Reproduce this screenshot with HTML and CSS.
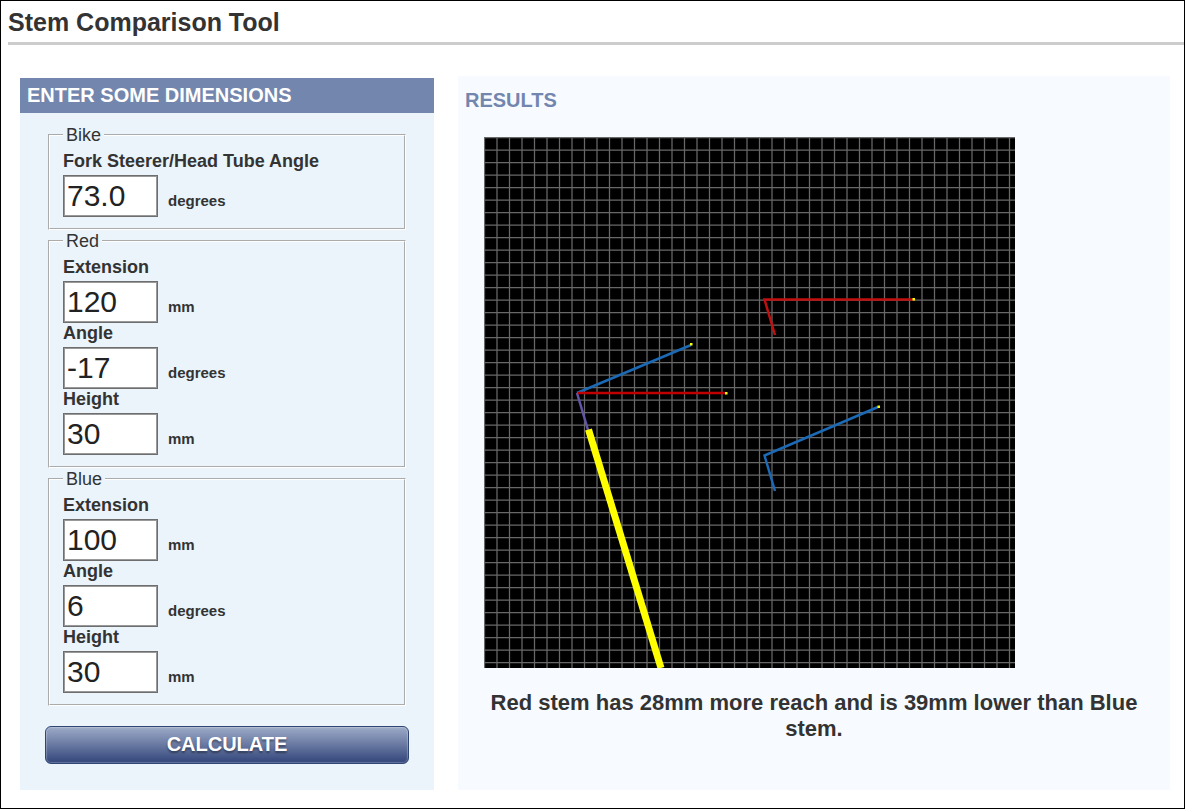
FILE: index.html
```html
<!DOCTYPE html>
<html lang="en">
<head>
  <meta charset="UTF-8">
  <title>Stem Comparison Tool</title>
  <link rel="stylesheet" href="styles.css">
</head>
<body>
  <h1>Stem Comparison Tool</h1>

  <div class="container">
    <div class="panel dimensions">
      <h2>ENTER SOME DIMENSIONS</h2>
      <form id="stemForm">
        <fieldset>
          <legend>Bike</legend>
          <label for="hta">Fork Steerer/Head Tube Angle</label>
          <div class="field"><input type="text" id="hta" value="73.0"><span>degrees</span></div>
        </fieldset>

        <fieldset>
          <legend>Red</legend>
          <label for="redExt">Extension</label>
          <div class="field"><input type="text" id="redExt" value="120"><span>mm</span></div>
          <label for="redAngle">Angle</label>
          <div class="field"><input type="text" id="redAngle" value="-17"><span>degrees</span></div>
          <label for="redHeight">Height</label>
          <div class="field"><input type="text" id="redHeight" value="30"><span>mm</span></div>
        </fieldset>

        <fieldset>
          <legend>Blue</legend>
          <label for="blueExt">Extension</label>
          <div class="field"><input type="text" id="blueExt" value="100"><span>mm</span></div>
          <label for="blueAngle">Angle</label>
          <div class="field"><input type="text" id="blueAngle" value="6"><span>degrees</span></div>
          <label for="blueHeight">Height</label>
          <div class="field"><input type="text" id="blueHeight" value="30"><span>mm</span></div>
        </fieldset>

        <button type="submit">CALCULATE</button>
      </form>
    </div>

    <div class="panel results">
      <h2>RESULTS</h2>
      <svg class="chart" viewBox="0 0 531 531" role="img" aria-label="Stem diagram">
        <rect width="531" height="531" fill="#000"/>
        <g id="gridLines" stroke="#686868" stroke-width="1.25"></g>

        <!-- both stems on the steerer -->
        <path d="M93 256L104 293" stroke="#6355a5" stroke-width="2.5"/>
        <path d="M93 256L207 208" stroke="#1c69b5" stroke-width="2.5"/>
        <path d="M94 256H242" stroke="#c00000" stroke-width="2.5"/>
        <path d="M104.5 292.5L177 531" stroke="#ff0" stroke-width="7"/>

        <!-- red stem, then blue stem, on their own -->
        <path d="M291 198L280.500 162.500H429" stroke="#c01010" stroke-width="2.5" fill="none"/>
        <path d="M291 354L280.500 318.500L394 270" stroke="#1c69b5" stroke-width="2.5" fill="none"/>

        <g fill="#ff0">
          <rect x="206" y="206" width="2.500" height="2.500"/>
          <rect x="241" y="255" width="2.500" height="2.500"/>
          <rect x="428.500" y="161" width="2.500" height="2.500"/>
          <rect x="393.500" y="268.500" width="2.500" height="2.500"/>
        </g>
      </svg>
      <p>Red stem has 28mm more reach and is 39mm lower than Blue stem.</p>
    </div>
  </div>

  <script src="script.js"></script>
</body>
</html>
```

FILE: styles.css
```css
* {
  box-sizing: border-box;
  margin: 0;
  padding: 0;
}

body {
  min-height: 100vh;
  border: 1px solid #000;
  background: #fff;
  color: #333;
  font-family: "Liberation Sans", Arial, sans-serif;
}

h1 {
  margin-left: 7px;
  padding: 5px 0 4px;
  border-bottom: 3px solid #ccc;
  font-size: 25px;
  line-height: 32px;
}

.container {
  display: flex;
  align-items: stretch;
  gap: 24px;
  padding: 31px 14px 18px 19px;
}

.panel h2 {
  font-size: 20px;
  line-height: 35px;
  padding: 0 7px;
}

.dimensions {
  flex: 0 0 36%;
  margin-top: 2px;
  background: #ebf3fb;
}

.dimensions h2 {
  background: #7386ad;
  color: #fff;
}

form {
  padding: 12px 25px 26px;
}

fieldset {
  margin: 0 3px 1px;
  padding: 6px 13px 11px;
  border: 2px groove #fff;
}

legend {
  padding: 0 3px;
  font-size: 18px;
  line-height: 20px;
}

label {
  display: block;
  margin-bottom: 4px;
  font-size: 18px;
  font-weight: bold;
  line-height: 20px;
}

.field {
  display: flex;
  align-items: baseline;
  gap: 10px;
}

input {
  width: 95px;
  height: 42px;
  padding: 0 3px;
  border: 1px solid #6e6e6e;
  box-shadow: inset 0 0 0 1px #999;
  background: #fff;
  color: #222;
  font-family: inherit;
  font-size: 30px;
}

.field span {
  font-size: 15px;
  font-weight: bold;
}

button {
  display: block;
  width: 100%;
  height: 38px;
  margin-top: 20px;
  padding-bottom: 2px;
  border: 1px solid #2f4675;
  border-radius: 6px;
  background: linear-gradient(#9dabc8, #32457a);
  box-shadow: inset 0 0 1px 1px rgba(255, 255, 255, 0.25);
  color: #fff;
  font-family: inherit;
  font-size: 20px;
  font-weight: bold;
  text-shadow: 0 2px 2px rgba(0, 0, 0, 0.4);
  cursor: pointer;
}

.results {
  flex: 1;
  padding: 7px 0 20px;
  background: #f7fbff;
}

.results h2 {
  color: #7386ad;
}

.chart {
  display: block;
  width: 75%;
  max-width: 531px;
  margin: 19px 26px 22px;
}

.results p {
  padding: 0 24px;
  font-size: 22px;
  font-weight: bold;
  line-height: 26px;
  text-align: center;
}
```

FILE: script.js
```js
// grid lines, one every 10mm
const grid = document.getElementById("gridLines");
let d = "";
for (let i = 0; i < 43; i++) {
  const p = 0.5 + i * 12.5;
  d += `M${p} 0V531M0 ${p}H531`;
}
const path = document.createElementNS("http://www.w3.org/2000/svg", "path");
path.setAttribute("d", d);
grid.appendChild(path);

document.getElementById("stemForm").addEventListener("submit", function (e) {
  e.preventDefault();
});
```
